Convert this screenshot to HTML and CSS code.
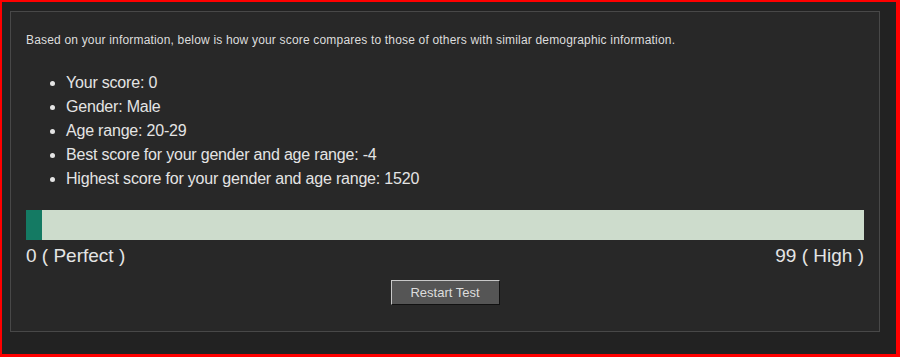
FILE: index.html
```html
<!DOCTYPE html>
<html lang="en">
<head>
    <meta charset="UTF-8">
    <title>Your Results</title>
    <link rel="stylesheet" href="styles.css">
</head>
<body>
    <div class="frame">
        <div class="panel">
            <p class="intro">Based on your information, below is how your score compares to those of others with similar demographic information.</p>

            <ul class="stats">
                <li>Your score: 0</li>
                <li>Gender: Male</li>
                <li>Age range: 20-29</li>
                <li>Best score for your gender and age range: -4</li>
                <li>Highest score for your gender and age range: 1520</li>
            </ul>

            <div class="meter">
                <div class="meter-fill" style="width: 1.9%;"></div>
            </div>
            <div class="meter-labels">
                <span>0 ( Perfect )</span>
                <span>99 ( High )</span>
            </div>

            <div class="actions">
                <button class="btn">Restart Test</button>
            </div>
        </div>
    </div>
</body>
</html>
```

FILE: styles.css
```css
* {
    margin: 0;
    padding: 0;
    box-sizing: border-box;
}

body {
    font-family: 'Liberation Sans', Arial, sans-serif;
    background: #222222;
    color: #dddddd;
}

.frame {
    width: 900px;
    height: 357px;
    border-style: solid;
    border-color: #ff0000;
    border-width: 2px 4px 3px 2px;
    background: #222222;
    padding: 9px 0 0 8px;
}

.panel {
    width: 870px;
    height: 321px;
    background: #282828;
    border: 1px solid #484848;
    padding: 20px 15px 0 15px;
}

.intro {
    font-size: 12px;
    line-height: 16px;
    letter-spacing: 0.18px;
    color: #dddddd;
}

.stats {
    margin-top: 23px;
    padding-left: 40px;
    list-style: disc;
}

.stats li {
    font-size: 16px;
    line-height: 24px;
    letter-spacing: -0.2px;
    color: #e4e4e4;
}

.meter {
    margin-top: 19px;
    height: 30px;
    background: #cddccc;
}

.meter-fill {
    height: 100%;
    background: #147a63;
}

.meter-labels {
    display: flex;
    justify-content: space-between;
    margin-top: 5px;
    font-size: 19px;
    line-height: 22px;
    color: #e4e4e4;
}

.actions {
    display: flex;
    justify-content: center;
    margin-top: 13px;
}

.btn {
    width: 109px;
    height: 25px;
    background: #555555;
    color: #dddddd;
    font-family: 'Liberation Sans', Arial, sans-serif;
    font-size: 13px;
    border: 1px solid;
    border-color: #c8c8c8 #111111 #111111 #c8c8c8;
    cursor: pointer;
}
```
